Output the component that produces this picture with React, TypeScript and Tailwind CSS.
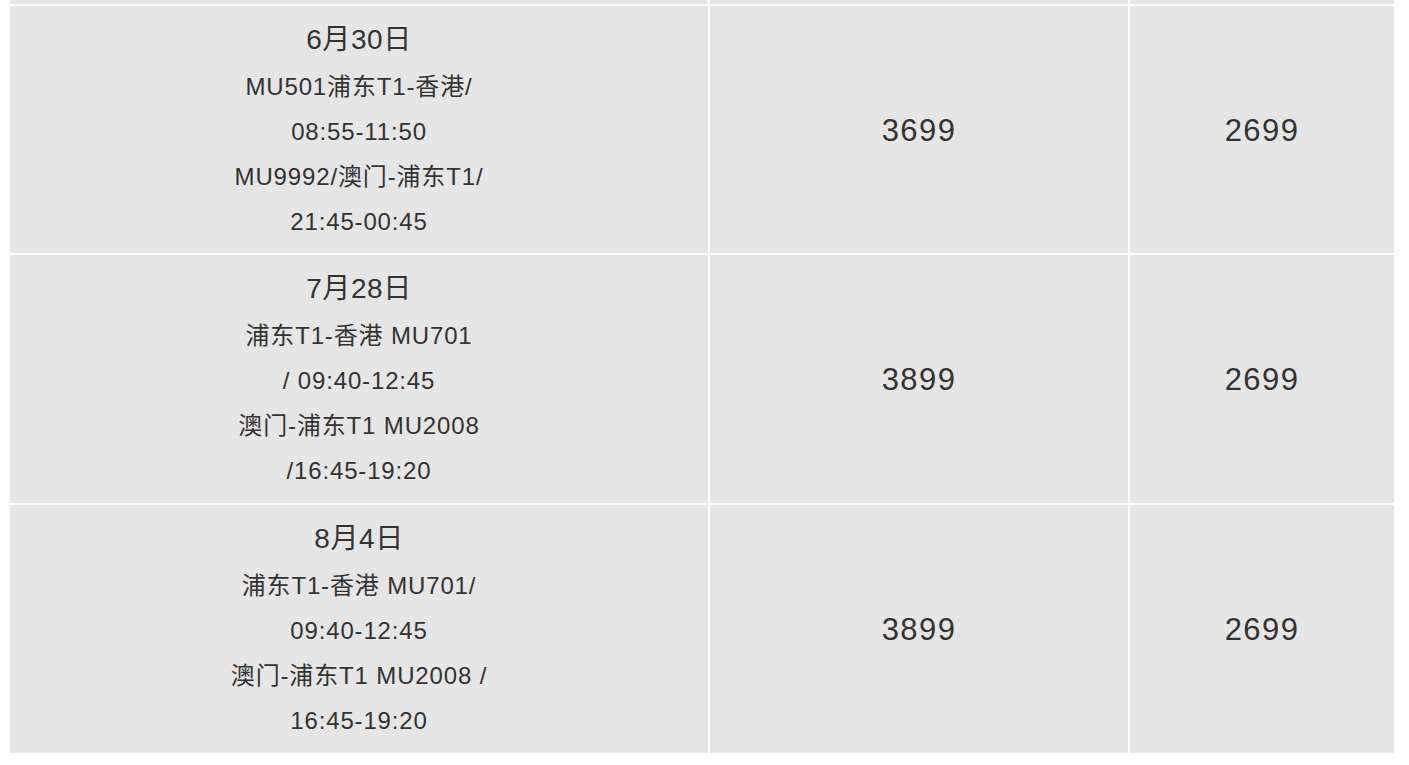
import React from "react";

const rows = [
  {
    date: "6月30日",
    lines: ["MU501浦东T1-香港/", "08:55-11:50", "MU9992/澳门-浦东T1/", "21:45-00:45"],
    a: "3699",
    b: "2699",
    h: "h-[247px]",
  },
  {
    date: "7月28日",
    lines: ["浦东T1-香港 MU701", "/ 09:40-12:45", "澳门-浦东T1 MU2008", "/16:45-19:20"],
    a: "3899",
    b: "2699",
    h: "h-[248px]",
  },
  {
    date: "8月4日",
    lines: ["浦东T1-香港 MU701/", "09:40-12:45", "澳门-浦东T1 MU2008 /", "16:45-19:20"],
    a: "3899",
    b: "2699",
    h: "h-[248px]",
  },
];

export default function App() {
  return (
    <div
      className="w-[1409px] h-[765px] bg-white px-[10px] overflow-hidden text-[#333333]"
      style={{ fontFamily: '"Liberation Sans", Arial, "Noto Sans CJK SC", sans-serif' }}
    >
      <div className="grid grid-cols-[698px_418px_264px] gap-[2px] bg-white">
        <div className="h-[4px] bg-[#e6e6e6]" />
        <div className="h-[4px] bg-[#e6e6e6]" />
        <div className="h-[4px] bg-[#e6e6e6]" />
        {rows.map((r, i) => (
          <React.Fragment key={i}>
            <div className={`${r.h} bg-[#e6e6e6] flex flex-col items-center justify-center text-center pt-[3px]`}>
              <div className="text-[28px] leading-[45px] tracking-[0.6px] -mt-[2px] mb-[2px]">{r.date}</div>
              {r.lines.map((l, j) => (
                <div key={j} className="text-[24px] leading-[45px] tracking-[0.85px]">
                  {l}
                </div>
              ))}
            </div>
            <div className={`${r.h} bg-[#e6e6e6] flex items-center justify-center text-[31px] tracking-[1.4px] pt-[3px]`}>
              {r.a}
            </div>
            <div className={`${r.h} bg-[#e6e6e6] flex items-center justify-center text-[31px] tracking-[1.4px] pt-[3px]`}>
              {r.b}
            </div>
          </React.Fragment>
        ))}
      </div>
    </div>
  );
}
